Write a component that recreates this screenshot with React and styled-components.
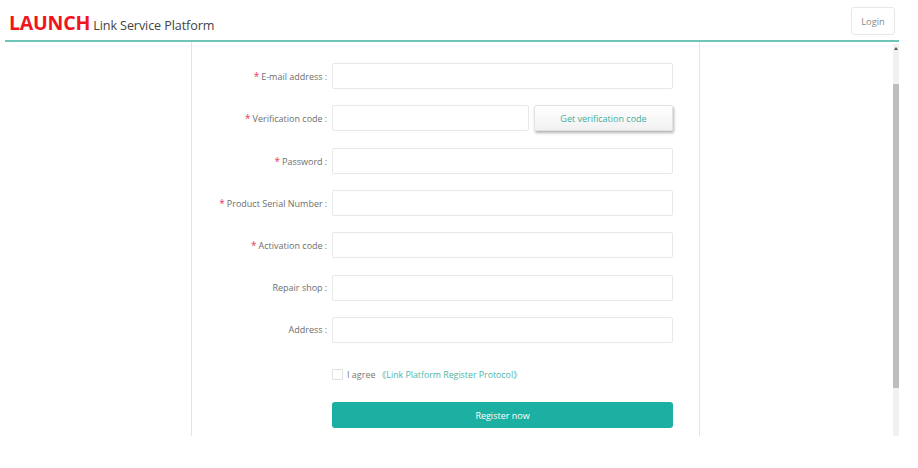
import React from "react";
import styled, { createGlobalStyle } from "styled-components";

const Global = createGlobalStyle`
  html, body { margin: 0; padding: 0; background: #fff; overflow: hidden; }
  body { font-family: "Open Sans", "Noto Sans CJK SC", sans-serif; }
`;

const Frame = styled.div`
  width: 894px;
  height: 436px;
  margin-left: 5px;
  display: flex;
  flex-direction: column;
  overflow: hidden;
`;

const Header = styled.header`
  height: 42px;
  flex: none;
  box-sizing: border-box;
  display: flex;
  align-items: center;
  justify-content: space-between;
  padding: 8px 4px 0 4px;
  border-bottom: 2px solid #6fc4ba;
`;

const Brand = styled.div`
  display: flex;
  align-items: baseline;
  gap: 3px;
  margin-bottom: 2px;
`;

const Logo = styled.span`
  font-family: "Open Sans", sans-serif;
  font-size: 19.5px;
  line-height: 24px;
  font-weight: 700;
  letter-spacing: -0.2px;
  color: #f0141c;
`;

const Title = styled.span`
  font-size: 12.6px;
  line-height: 20px;
  color: #444;
  letter-spacing: -0.1px;
`;

const LoginButton = styled.button`
  width: 44px;
  height: 28px;
  box-sizing: border-box;
  margin: 0 0 6px 0;
  padding: 0;
  background: #fff;
  border: 1px solid #e8e8e8;
  border-radius: 3px;
  font: 400 9.3px "Open Sans", sans-serif;
  color: #8a8a8a;
`;

const Body = styled.div`
  flex: 1;
  min-height: 0;
  display: flex;
`;

const Stage = styled.main`
  flex: 1;
  display: flex;
  padding-left: 186px;
`;

const Panel = styled.section`
  width: 509px;
  box-sizing: border-box;
  border-left: 1px solid #e4e4e4;
  border-right: 1px solid #e4e4e4;
  padding: 21px 26px 0 0;
  display: flex;
  flex-direction: column;
`;

const Row = styled.div`
  display: grid;
  grid-template-columns: 140px 1fr;
  align-items: center;
  height: 26px;
  margin-bottom: 16.33px;
`;

const Label = styled.label`
  font-size: 9px;
  color: #6e6e6e;
  text-align: right;
  white-space: nowrap;
  padding: 0 5px 0 0;
`;

const Star = styled.span`
  color: #e8395c;
  margin-right: 2px;
  font-size: 10px;
`;

const Colon = styled.span`
  margin-left: 2px;
`;

const Field = styled.div`
  display: flex;
  gap: 5px;
  min-width: 0;
`;

const Input = styled.input`
  flex: 1;
  min-width: 0;
  height: 26px;
  box-sizing: border-box;
  background: #fff;
  border: 1px solid #e8e8e8;
  border-radius: 2px;
  padding: 0 6px;
`;

const CodeButton = styled.button`
  width: 139px;
  height: 26px;
  flex: none;
  box-sizing: border-box;
  background: linear-gradient(#ffffff, #f1f1f1);
  border: 1px solid #e2e2e2;
  border-radius: 2px;
  box-shadow: 1px 2px 3px rgba(0, 0, 0, 0.3);
  font: 400 9px "Open Sans", sans-serif;
  color: #3fae9c;
  padding: 0;
`;

const AgreeRow = styled.div`
  display: flex;
  align-items: center;
  margin: 8px 0 0 140px;
  height: 14px;
  font-size: 9px;
`;

const Check = styled.input.attrs({ type: "checkbox" })`
  appearance: none;
  width: 11px;
  height: 11px;
  margin: 0 4px 0 0;
  border: 1px solid #e0e0e0;
  border-radius: 1px;
  background: #fff;
`;

const AgreeText = styled.span`
  color: #777;
  margin-right: 2px;
`;

const Protocol = styled.a`
  color: #4fb5a6;
  font-size: 8.8px;
  white-space: nowrap;
`;

const Submit = styled.button`
  margin: 21px 0 0 140px;
  height: 26px;
  width: 341px;
  flex: none;
  background: #1cb0a2;
  border: none;
  border-radius: 3px;
  color: #fff;
  font: 400 9px "Open Sans", sans-serif;
  padding: 0;
`;

const Scrollbar = styled.div`
  width: 6px;
  flex: none;
  margin-top: 2px;
  background: #f1f1f1;
  display: flex;
  flex-direction: column;
`;

const ScrollArrow = styled.div`
  height: 40px;
  flex: none;
  position: relative;
  &::before {
    content: "";
    position: absolute;
    top: 3px;
    left: 1px;
    border-left: 2px solid transparent;
    border-right: 2px solid transparent;
    border-bottom: 3px solid #555;
  }
`;

const ScrollThumb = styled.div`
  height: 304px;
  background: #bdbdbd;
`;

const fields = [
  { label: "E-mail address", required: true },
  { label: "Verification code", required: true, code: true },
  { label: "Password", required: true },
  { label: "Product Serial Number", required: true },
  { label: "Activation code", required: true },
  { label: "Repair shop" },
  { label: "Address" },
];

export default function App() {
  return (
    <>
      <Global />
      <Frame>
        <Header>
          <Brand>
            <Logo>LAUNCH</Logo>
            <Title>Link Service Platform</Title>
          </Brand>
          <LoginButton>Login</LoginButton>
        </Header>
        <Body>
          <Stage>
            <Panel>
              {fields.map((f) => (
                <Row key={f.label}>
                  <Label>
                    {f.required && <Star>*</Star>}
                    {f.label}
                    <Colon>:</Colon>
                  </Label>
                  <Field>
                    <Input />
                    {f.code && <CodeButton>Get verification code</CodeButton>}
                  </Field>
                </Row>
              ))}
              <AgreeRow>
                <Check />
                <AgreeText>I agree</AgreeText>
                <Protocol>《Link Platform Register Protocol》</Protocol>
              </AgreeRow>
              <Submit>Register now</Submit>
            </Panel>
          </Stage>
          <Scrollbar>
            <ScrollArrow />
            <ScrollThumb />
          </Scrollbar>
        </Body>
      </Frame>
    </>
  );
}
